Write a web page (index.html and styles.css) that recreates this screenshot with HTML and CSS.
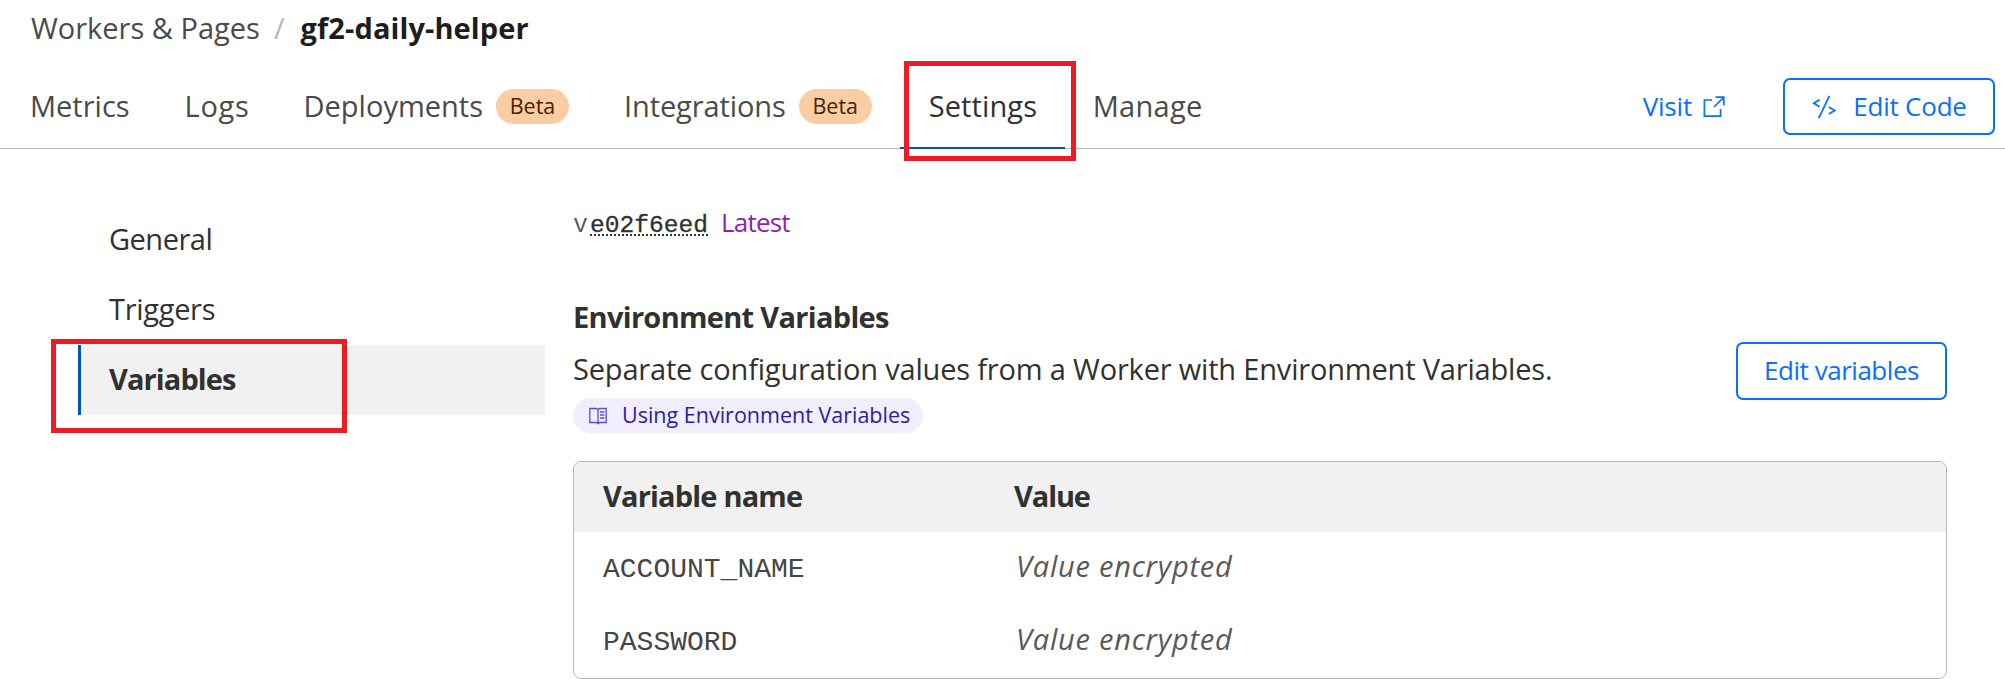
FILE: index.html
```html
<!DOCTYPE html>
<html lang="en">
<head>
<meta charset="utf-8">
<title>gf2-daily-helper</title>
<link rel="stylesheet" href="styles.css">
</head>
<body>
<nav class="breadcrumb">
  <a class="crumb">Workers &amp; Pages</a>
  <span class="crumb-sep">/</span>
  <strong class="crumb-current">gf2-daily-helper</strong>
</nav>

<header class="tabbar">
  <nav class="tabs">
    <a class="tab tab-metrics"><span class="label">Metrics</span></a>
    <a class="tab tab-logs"><span class="label">Logs</span></a>
    <a class="tab tab-deployments"><span class="label">Deployments</span><span class="badge">Beta</span></a>
    <a class="tab tab-integrations"><span class="label">Integrations</span><span class="badge">Beta</span></a>
    <a class="tab tab-active"><span class="label">Settings</span></a>
    <a class="tab tab-manage"><span class="label">Manage</span></a>
  </nav>
  <div class="actions">
    <a class="visit"><span>Visit</span>
      <svg width="22" height="22" viewBox="0 0 22 22" fill="none" stroke="currentColor" stroke-width="1.7"><path d="M9 4H1.4V20.2H17.6V13M12.5 1.2H20.8V9.5M20.4 1.6L11 11"/></svg>
    </a>
    <a class="button button-code">
      <svg width="24" height="24" viewBox="0 0 24 24" fill="none" stroke="currentColor" stroke-width="1.8"><path d="M7.6 4.8L1.8 8.3L7.6 11.8M17.4 .8L6.8 23.2M16.8 12L22.8 15.5L16.8 19"/></svg>
      <span>Edit Code</span>
    </a>
  </div>
</header>

<div class="layout">
  <aside class="sidebar">
    <a class="side-item side-general">General</a>
    <a class="side-item side-triggers">Triggers</a>
    <a class="side-item side-active">Variables</a>
  </aside>

  <main class="content">
    <div class="version"><span class="version-v">v</span><code class="version-id">e02f6eed</code><span class="version-tag">Latest</span></div>

    <section class="intro">
      <div class="intro-text">
        <h2 class="title">Environment Variables</h2>
        <p class="description">Separate configuration values from a Worker with Environment Variables.</p>
        <a class="doc-link">
          <svg width="18" height="18" viewBox="0 0 18 18" fill="none" stroke="currentColor" stroke-width="1.3"><path d="M.8 1.5H7.6L9 2.8L10.4 1.5H17.2V15.5H10.4L9 16.8L7.6 15.5H.8ZM9 2.8V16.8M11 5H15.4M11 8H15.4M11 11H15.4"/></svg>
          <span>Using Environment Variables</span>
        </a>
      </div>
      <a class="button button-edit">Edit variables</a>
    </section>

    <div class="table">
      <div class="row row-head"><span class="head-name">Variable name</span><span class="head-value">Value</span></div>
      <div class="row"><code class="name">ACCOUNT_NAME</code><em class="value">Value encrypted</em></div>
      <div class="row"><code class="name">PASSWORD</code><em class="value">Value encrypted</em></div>
    </div>
  </main>
</div>

<div class="highlight highlight-settings"></div>
<div class="highlight highlight-variables"></div>
</body>
</html>
```
FILE: styles.css
```css
* { box-sizing: border-box; }
body {
  position: relative;
  margin: 0;
  width: 2005px;
  height: 697px;
  overflow: hidden;
  background: #fff;
  color: #313131;
  font: 29px/40px "Open Sans", "Noto Sans", sans-serif;
  white-space: nowrap;
}
svg { display: block; flex: none; }

.breadcrumb { display: flex; height: 65px; padding: 8px 0 0 31px; }
.crumb { color: #4a4a4a; }
.crumb-sep { margin: 0 16px 0 14px; color: #b6b6b6; }
.crumb-current { color: #1d1d1d; font-weight: 700; letter-spacing: .1px; }

.tabbar {
  display: flex;
  justify-content: space-between;
  height: 84px;
  padding-right: 10px;
  border-bottom: 1px solid #b6b6b6;
}
.tabs { display: flex; padding-left: 2px; }
.tab { display: flex; align-items: center; height: 84px; padding: 0 28px; color: #4a4a4a; }
.label { margin-bottom: 3px; }
.tab-metrics { padding-right: 27px; }
.tab-logs { letter-spacing: .7px; padding-right: 26px; }
.tab-deployments { padding-right: 27px; }
.tab-integrations .label { letter-spacing: -.1px; }
.tab-active { width: 165px; padding-left: 29px; letter-spacing: .1px; color: #313131; border-bottom: 2px solid #0051c3; }
.tab-active .label { margin-bottom: 1px; }
.tab-manage { letter-spacing: .3px; }
.badge {
  width: 73px;
  height: 35px;
  margin: 0 0 1px 13px;
  border-radius: 18px;
  background: #fbcda5;
  color: #482303;
  font-size: 21.5px;
  line-height: 34px;
  text-align: center;
}

.actions { display: flex; align-items: center; font-size: 26px; color: #086fff; }
.visit { display: flex; align-items: center; margin-right: 58px; letter-spacing: -.2px; }
.visit span { margin: 0 11px 1px 0; }
.button {
  display: flex;
  align-items: center;
  justify-content: center;
  height: 58px;
  border: 2px solid #086fff;
  border-radius: 7px;
  color: #086fff;
  font-size: 26px;
}
.button-code { width: 212px; height: 57px; padding-left: 1px; letter-spacing: -.23px; }
.button-code span { margin: 0 0 1px 17px; }

.layout { display: flex; }
.sidebar { width: 467px; margin: 56px 28px 0 78px; }
.side-item { display: block; height: 70px; padding-left: 31px; line-height: 67px; letter-spacing: -.5px; }
.side-triggers { letter-spacing: -.3px; }
.side-active {
  padding-left: 28px;
  border-left: 3px solid #0051c3;
  background: #f1f1f1;
  font-weight: 700;
  letter-spacing: -.9px;
}

.content { width: 1374px; padding-top: 53px; }
.version { display: flex; align-items: baseline; height: 95px; font-size: 26px; }
.version-v { width: 13px; margin-left: 1px; color: #595959; }
.version-id {
  margin-left: 3px;
  font: 24.6px/26px "Liberation Mono", monospace;
  -webkit-text-stroke: .3px;
  text-decoration: underline dotted 2px;
  text-underline-offset: 2px;
}
.version-tag { margin-left: 13px; color: #8e1fb3; letter-spacing: -.8px; }
.intro { display: flex; justify-content: space-between; align-items: flex-start; height: 164px; }
.title { margin: 0; font-size: 29px; line-height: 40px; font-weight: 700; letter-spacing: -.69px; }
.description { margin: 12px 0 9px 0; letter-spacing: -.18px; }
.doc-link {
  display: flex;
  align-items: center;
  width: 350px;
  height: 35px;
  padding-left: 16px;
  border-radius: 18px;
  background: #f1effd;
  color: #5b4bd9;
  font-size: 21.5px;
}
.doc-link span { margin: 0 0 2px 15px; color: #2c1ca8; }
.button-edit { width: 211px; margin-top: 45px; padding-bottom: 3px; letter-spacing: -.47px; }

.table { height: 218px; border: 1px solid #b6b6b6; border-radius: 8px; overflow: hidden; }
.row { display: grid; grid-template-columns: 411px 1fr; align-items: center; height: 73px; padding-left: 29px; }
.row-head { height: 70px; background: #f1f1f1; font-weight: 700; letter-spacing: -.82px; padding-bottom: 2px; }
.head-value { letter-spacing: -1.1px; }
.name { padding-top: 3px; color: #454545; font: 28px/40px "Liberation Mono", monospace; }
.value { padding: 0 0 5px 2px; color: #595959; letter-spacing: .77px; }

.highlight { position: absolute; border: 5px solid #ed1c24; }
.highlight-settings { left: 904px; top: 61px; width: 172px; height: 100px; }
.highlight-variables { left: 51px; top: 339px; width: 296px; height: 94px; }
```
